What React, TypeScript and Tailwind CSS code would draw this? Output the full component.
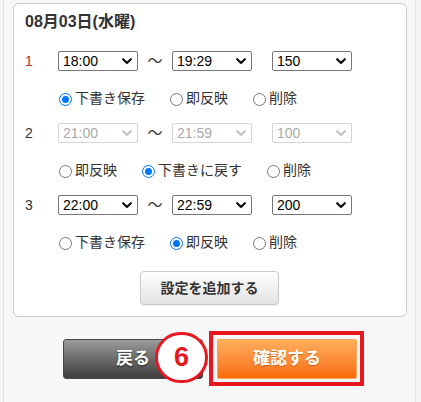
import React from "react";

type RadioItem = { label: string; checked: boolean };

interface RowData {
  no: string;
  from: string;
  to: string;
  count: string;
  disabled?: boolean;
  red?: boolean;
  radios: RadioItem[];
}

const rows: RowData[] = [
  {
    no: "1",
    from: "18:00",
    to: "19:29",
    count: "150",
    red: true,
    radios: [
      { label: "下書き保存", checked: true },
      { label: "即反映", checked: false },
      { label: "削除", checked: false },
    ],
  },
  {
    no: "2",
    from: "21:00",
    to: "21:59",
    count: "100",
    disabled: true,
    radios: [
      { label: "即反映", checked: false },
      { label: "下書きに戻す", checked: true },
      { label: "削除", checked: false },
    ],
  },
  {
    no: "3",
    from: "22:00",
    to: "22:59",
    count: "200",
    radios: [
      { label: "下書き保存", checked: false },
      { label: "即反映", checked: true },
      { label: "削除", checked: false },
    ],
  },
];

const SelectBox: React.FC<{ value: string; disabled?: boolean }> = ({ value, disabled }) => (
  <div
    className={`w-[80px] h-[20px] rounded-[2px] border flex items-center justify-between pl-[4px] pr-[4px] bg-white ${
      disabled ? "border-[#d4d4d4] text-[#a9a9a9]" : "border-[#767676] text-black"
    }`}
  >
    <span className="text-[14px] leading-[18px]">{value}</span>
    <svg width="10" height="7" viewBox="0 0 10 7" className="mr-[1px]">
      <path
        d="M1.2 1.2 L5 5 L8.8 1.2"
        fill="none"
        stroke={disabled ? "#c4c4c4" : "#111"}
        strokeWidth="2.2"
        strokeLinecap="round"
        strokeLinejoin="round"
      />
    </svg>
  </div>
);

const Radio: React.FC<RadioItem> = ({ label, checked }) => (
  <div className="flex items-center mr-[25px]">
    {checked ? (
      <span className="w-[13px] h-[13px] rounded-full border-[1.5px] border-[#0075ff] bg-white flex items-center justify-center mt-[2px]">
        <span className="w-[7px] h-[7px] rounded-full bg-[#0075ff]" />
      </span>
    ) : (
      <span className="w-[13px] h-[13px] rounded-full border border-[#767676] bg-white mt-[2px]" />
    )}
    <span className="ml-[3px] text-[14px] leading-[20px] text-[#333]">{label}</span>
  </div>
);

export default function App() {
  return (
    <div
      className="w-[421px] h-[402px] bg-[#f4f4f4] pl-[3px] pr-[5px] overflow-hidden"
      style={{ fontFamily: '"Liberation Sans", "Noto Sans CJK JP", sans-serif' }}
    >
      <div className="h-full border-x border-[#e2e2e2] bg-[#f7f7f7] pl-[9px] pr-[8px] pt-[3px]">
        <div className="h-[314px] rounded-[6px] border border-[#cbcbcb] bg-white pl-[11px]">
          <div className="mt-[8px] h-[20px] text-[16px] leading-[20px] font-bold text-[#333]">
            08月03日(水曜)
          </div>
          <div className="mt-[19px] flex flex-col">
            {rows.map((r, i) => (
              <div key={r.no} className={i > 0 ? "mt-[15px]" : ""}>
                <div className="flex items-center h-[20px]">
                  <span
                    className={`w-[33px] text-[14px] leading-[20px] ${
                      r.red ? "text-[#b3312c]" : "text-[#333]"
                    }`}
                  >
                    {r.no}
                  </span>
                  <SelectBox value={r.from} disabled={r.disabled} />
                  <span className="w-[34px] text-center text-[15px] leading-[20px] text-[#444]">〜</span>
                  <SelectBox value={r.to} disabled={r.disabled} />
                  <span className="w-[20px]" />
                  <SelectBox value={r.count} disabled={r.disabled} />
                </div>
                <div className="mt-[17px] h-[20px] flex items-center pl-[34px]">
                  {r.radios.map((rd) => (
                    <Radio key={rd.label} label={rd.label} checked={rd.checked} />
                  ))}
                </div>
              </div>
            ))}
          </div>
          <div className="mt-[19px] flex pl-[115px]">
            <div className="w-[139px] h-[34px] rounded-[4px] border border-[#cacaca] bg-linear-to-b from-white to-[#e4e2e2] shadow-[0_1px_1px_rgba(0,0,0,0.08)] flex items-center justify-center text-[14px] font-bold text-[#333]">
              設定を追加する
            </div>
          </div>
        </div>

        <div className="relative mt-[14px] flex items-center pl-[50px]">
          <div className="w-[140px] h-[40px] rounded-[3px] border border-[#474747] bg-linear-to-b from-[#9b9b9b] to-[#3f3f3f] flex items-center justify-center text-[17px] font-bold text-white [text-shadow:0_1px_2px_rgba(0,0,0,0.6)]">
            戻る
          </div>
          <div className="ml-[6px] w-[155px] h-[55px] border-4 border-[#e8161f] flex items-center pl-[4px]">
            <div className="w-[140px] h-[40px] rounded-[2px] border border-[#f7a557] bg-linear-to-b from-[#ffae5c] to-[#f76b00] flex items-center justify-center text-[17px] font-bold text-white [text-shadow:0_1px_1px_rgba(160,60,0,0.5)]">
              確認する
            </div>
          </div>
          <div className="absolute left-[142px] top-[1px] w-[53px] h-[51px] rounded-full border-[3px] border-[#e8161f] bg-white flex items-center justify-center">
            <span className="text-[27px] font-bold leading-none text-[#e8161f]">6</span>
          </div>
        </div>
      </div>
    </div>
  );
}
